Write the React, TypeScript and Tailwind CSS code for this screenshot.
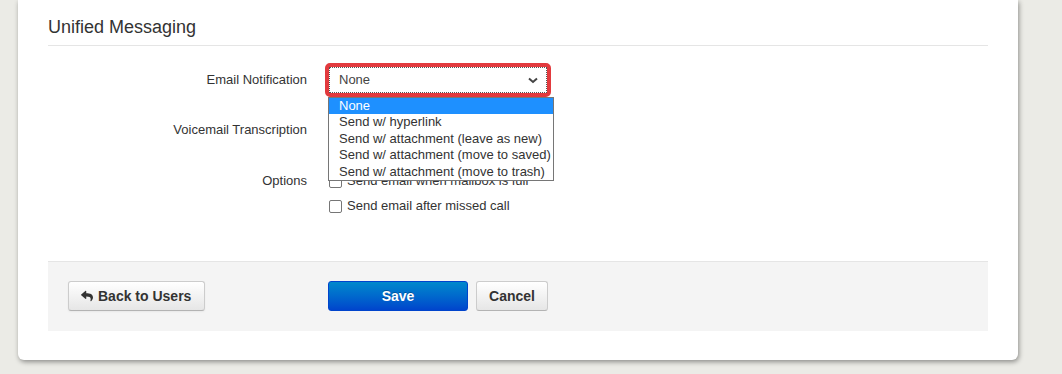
import React from 'react';
import { FaReply } from 'react-icons/fa';

const options = [
  'None',
  'Send w/ hyperlink',
  'Send w/ attachment (leave as new)',
  'Send w/ attachment (move to saved)',
  'Send w/ attachment (move to trash)',
];

function Checkbox({ label }: { label: string }) {
  return (
    <label className="flex items-center h-[20px] gap-[5px] text-[13px] text-[#333]">
      <span className="w-[13px] h-[13px] shrink-0 rounded-[2px] border border-[#767676] bg-white" />
      <span>{label}</span>
    </label>
  );
}

function EmailSelect() {
  return (
    <div className="relative w-[226px] h-[34px]">
      <div className="w-full h-full rounded-[5px] border-[4px] border-[#e23a3e] bg-white">
        <div className="h-full border border-dotted border-[#555] flex items-center justify-between pl-[9px] pr-[8px] text-[13px] text-[#444]">
          <span>None</span>
          <svg width="10" height="7" viewBox="0 0 10 7" className="mt-[1px]">
            <polyline points="1,1.5 5,5 9,1.5" fill="none" stroke="#444" strokeWidth="2" />
          </svg>
        </div>
      </div>
      <ul className="absolute z-10 top-[34px] left-[3px] w-[226px] bg-white border border-[#767676] text-[13px] text-[#333]">
        {options.map((opt, i) => (
          <li
            key={opt}
            className={
              i === 0
                ? 'h-[16.4px] leading-[16px] pl-[10px] bg-[#1e90ff] text-white'
                : 'h-[16.4px] leading-[16px] pl-[10px]'
            }
          >
            {opt}
          </li>
        ))}
      </ul>
    </div>
  );
}

export default function App() {
  return (
    <div className="min-h-[374px] bg-[#ebebe6] font-['Liberation_Sans',Arial,sans-serif] pb-[14px]">
      <div className="ml-[18px] w-[1000px] bg-white rounded-b-[6px] shadow-[1px_2px_5px_rgba(0,0,0,0.4)] px-[30px] pt-[17px] pb-[29px]">
        <div className="border-b border-[#e5e5e5] pb-[8px]">
          <h2 className="text-[18px] leading-[20px] text-[#333]">Unified Messaging</h2>
        </div>

        <div className="mt-[17px]">
          <div className="flex items-center gap-[18px] h-[34px]">
            <div className="w-[259px] text-right text-[13px] text-[#333]">Email Notification</div>
            <EmailSelect />
          </div>

          <div className="flex items-center gap-[21px] h-[34px] mt-[16px]">
            <div className="w-[259px] text-right text-[13px] text-[#333]">Voicemail Transcription</div>
            <div className="w-[220px] h-[26px] ml-[1px] border border-[#aaa] rounded-[3px] bg-white" />
          </div>

          <div className="flex items-start gap-[21px] mt-[24px]">
            <div className="w-[259px] text-right text-[13px] leading-[20px] text-[#333]">Options</div>
            <div className="flex flex-col gap-[5px] pl-[1px]">
              <Checkbox label="Send email when mailbox is full" />
              <Checkbox label="Send email after missed call" />
            </div>
          </div>
        </div>

        <div className="mt-[45px] border-t border-[#e5e5e5] bg-[#f4f4f4] flex items-center px-[20px] pt-[19px] pb-[20px]">
          <button className="h-[30px] w-[137px] flex items-center gap-[5px] pl-[12px] rounded-[3px] border border-[#ccc] border-b-[#b3b3b3] bg-gradient-to-b from-white to-[#e6e6e6] text-[14px] font-bold text-[#333] shadow-[inset_0_1px_0_rgba(255,255,255,0.2),0_1px_2px_rgba(0,0,0,0.05)]">
            <FaReply size={12} />
            <span>Back to Users</span>
          </button>
          <button className="ml-[123px] h-[30px] w-[140px] rounded-[3px] border border-[#0044cc] bg-gradient-to-b from-[#0088cc] to-[#0044cc] text-[14px] font-bold text-white [text-shadow:0_-1px_0_rgba(0,0,0,0.25)]">
            Save
          </button>
          <button className="ml-[8px] h-[30px] w-[72px] rounded-[3px] border border-[#ccc] border-b-[#b3b3b3] bg-gradient-to-b from-white to-[#e6e6e6] text-[14px] font-bold text-[#333]">
            Cancel
          </button>
        </div>
      </div>
    </div>
  );
}
